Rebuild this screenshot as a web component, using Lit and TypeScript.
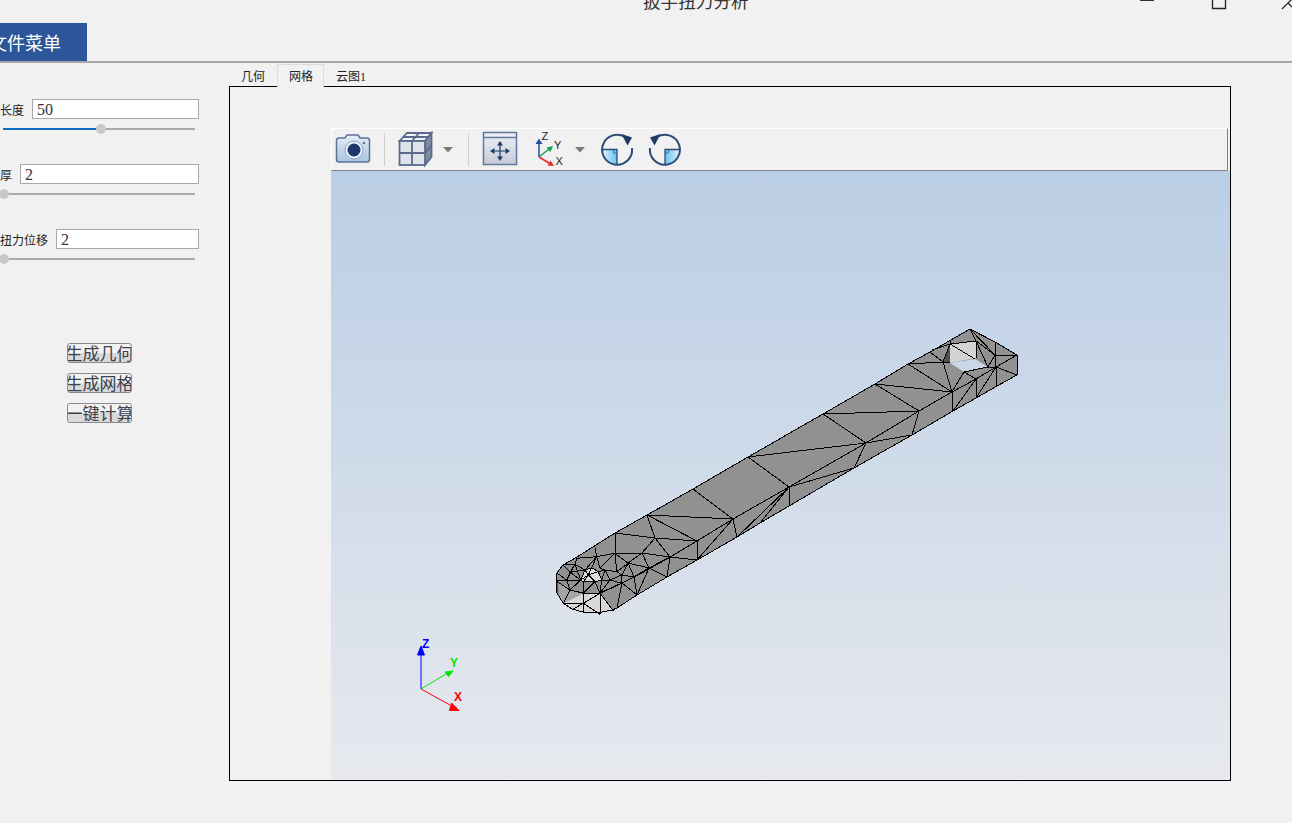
import { LitElement, html, css, svg } from "lit";
import { customElement } from "lit/decorators.js";

// wrench outline, in page coordinates (the svg viewBox matches the page)
const OUTLINE =
  "970,329 995,342 1017,355 1017,375 997,386 976,398 953,411 912,435 854,468 789,506 760,523 737,537 697,560 667,577 637,595 617,608 612,610 600,612.500 583,612 572,609 563,603 557,593 556,580 557,573 563,565 577,557 615,533 647,515 693,489 748,457 823,414 875,384 908,364 930,352";
const HOLE = "950,363 975,359 988,367 964,372";

const EDGES = [
  // right end
  "951,341 950,344 976,341 970,329",
  "950,344 943,362 950,363",
  "976,341 976,358",
  "950,344 975,359",
  "930,352 943,362 908,364",
  "932,350 950,344",
  "976,341 995,355 996,367",
  "970,329 995,355",
  "995,342 995,355 1017,355",
  "995,355 988,367 996,367",
  "976,341 988,367",
  "1017,355 996,367 1017,375",
  "996,367 997,386",
  "996,367 976,398",
  "996,367 976,379",
  "976,379 964,372 952,392",
  "943,362 952,392",
  "976,379 976,398",
  "964,372 988,367",
  "976,379 953,411",
  // long part, top face and side face
  "1017,355 996,367 976,379 952,392 919,411 866,443 789,487 733,519 697,541",
  "908,364 952,392 953,411",
  "875,384 952,392",
  "875,384 919,411 912,435",
  "823,414 919,411",
  "823,414 866,443 854,468",
  "748,457 866,443",
  "866,443 912,435",
  "748,457 789,487 789,506",
  "789,487 854,468",
  "789,487 760,523",
  "789,487 737,537 733,519",
  "693,489 733,519 697,560 697,541",
  "647,515 733,519",
  // towards the rounded end
  "647,515 697,541 655,538 647,515",
  "615,533 655,538 670,557 697,541",
  "670,557 697,560",
  "655,538 642,553 670,557 667,577",
  "670,557 649,568 642,553",
  "649,568 667,577",
  "649,568 634,577 637,595",
  "649,568 637,595",
  "642,553 628,563 649,568",
  "628,563 634,577",
  "642,553 615,553 615,533",
  "634,577 622,583 637,595",
  "622,575 634,577",
  "622,583 617,608",
  // top edge of the side wall
  "697,541 667,559 640,574 622,583 600,593 583,593 570,590 556,581",
];

// the dense part round the small hole, read off a 3x crop with its corner at 550,535
const END_EDGES = [
  "80,70 75,88 40,90",
  "75,88 105,105",
  "75,88 92,135",
  "75,88 50,135",
  "22,115 50,135",
  "18,135 50,135 92,135",
  "50,135 60,165",
  "92,135 60,165 100,175",
  "60,165 40,205",
  "100,140 100,175",
  "135,140 100,175 150,175",
  "135,140 150,175",
  "155,135 150,175",
  "155,135 180,135 150,175",
  "180,135 215,145 150,175",
  "150,175 190,228",
  "100,175 100,205 65,225",
  "100,205 100,235",
  "100,205 150,238",
  "100,205 40,205",
  "150,175 100,205",
  "150,175 150,238",
  "125,98 140,65 105,105",
  "140,65 80,70",
  "140,65 135,38",
  "140,65 195,55",
  "140,65 150,100 195,55",
  "150,100 165,105 200,110 195,55",
  "200,110 235,85 195,55",
  "200,110 215,120 180,135",
  "165,105 180,135",
  "215,120 215,145",
  "235,85 215,120",
  "92,135 105,105 125,98 145,110 155,135 135,140 100,140 92,135",
  "125,98 115,120 92,135",
  "115,120 135,140",
  "115,120 145,110",
  "115,120 100,140",
  "105,105 115,120",
  "75,88 60,112 50,135",
  "40,90 60,112 92,135",
  "60,112 105,105",
  "145,110 165,105",
  "155,135 165,105",
];

const fromCrop = (s: string) =>
  s
    .split(" ")
    .map((p) => {
      const [x, y] = p.split(",").map(Number);
      return `${(550 + x / 3).toFixed(1)},${(535 + y / 3).toFixed(1)}`;
    })
    .join(" ");

const edgePath = (list: string[]) =>
  list.map((s) => "M" + s.trim().split(/\s+/).join("L")).join("");

const wrench = svg`
  <path fill="#919191" fill-rule="evenodd" d="M${OUTLINE.split(" ").join("L")}Z M${HOLE.split(" ").join("L")}Z"></path>
  <polygon fill="#d4d4d4" points="950,344 976,341 976,358 950,363"></polygon>
  <polygon fill="#4f4f4f" points="950,344 943,362 950,363"></polygon>
  <polygon fill="#d8d8d8" points=${fromCrop("40,205 100,175 150,175 190,228 150,238 100,235 65,225")}></polygon>
  <polygon fill="#a6a6a6" points=${fromCrop("20,140 60,165 100,175 40,205 20,175")}></polygon>
  <polygon fill="#dcdcdc" points=${fromCrop("92,135 105,105 125,98 145,110 155,135 135,140 100,140")}></polygon>
  <polygon fill="#5a5a5a" points=${fromCrop("18,135 24,137 26,182 20,175")}></polygon>
  <path d=${edgePath([...EDGES, ...END_EDGES.map(fromCrop)])} fill="none" stroke="#000" shape-rendering="crispEdges"></path>
  <polygon points=${OUTLINE} fill="none" stroke="#000" shape-rendering="crispEdges"></polygon>
`;

const triad = svg`
  <g font-family="'Liberation Sans', sans-serif" font-weight="700" font-size="12">
    <path d="M421 689V655" stroke="#0000ff" fill="none"></path>
    <path d="M421 646L424.500 655H417.500Z" fill="#0000ff" stroke="#0000ff" stroke-linejoin="round"></path>
    <text x="422" y="648" fill="#0000ff">Z</text>
    <path d="M421 689L446 674" stroke="#00e600" fill="none"></path>
    <path d="M453 671L448.500 676.500L445 672Z" fill="#00e600" stroke="#00e600" stroke-linejoin="round"></path>
    <text x="450" y="667" fill="#00e600">Y</text>
    <path d="M421 689L450 705" stroke="#ff0000" fill="none"></path>
    <path d="M459 710.500L449.500 710.500L451.500 703Z" fill="#ff0000" stroke="#ff0000" stroke-linejoin="round"></path>
    <text x="454" y="701" fill="#ff0000">X</text>
  </g>
`;

const camera = html`<svg class="tool cam" viewBox="335 129 36 41">
  <defs>
    <linearGradient id="camBody" x1="0" y1="0" x2="0" y2="1">
      <stop offset="0" stop-color="#e4edf6"></stop>
      <stop offset="1" stop-color="#a9c4e0"></stop>
    </linearGradient>
  </defs>
  <path d="M339 138H345L347 135H358L360 138H367Q369.500 138 369.500 140.500V159.500Q369.500 162 367 162H339Q336.500 162 336.500 159.500V140.500Q336.500 138 339 138Z"
    fill="url(#camBody)" stroke="#5d7196" stroke-width="1.500"></path>
  <circle cx="354" cy="150" r="9" fill="#eef3f9" stroke="#8ea4c2"></circle>
  <circle cx="354" cy="150" r="6.500" fill="#1d3a70"></circle>
  <circle cx="364" cy="143" r="1.200" fill="#5d7196"></circle>
</svg>`;

const cube = html`<svg class="tool cube" viewBox="398 129 36 41">
  <path d="M399.500 141L407 133H431.500L425 141Z" fill="#f0f2f6" stroke="#5a6a8a" stroke-width="1.800"></path>
  <path d="M425 141L431.500 133V157L425 165Z" fill="#7f8ba3" stroke="#5a6a8a" stroke-width="1.800"></path>
  <rect x="399.500" y="141" width="25.500" height="24" fill="#dfe3ea" stroke="#5a6a8a" stroke-width="1.800"></rect>
  <path d="M412 141V165M399.500 153H425M412 141L419 133M403 137H428M425 153L431.500 145" fill="none" stroke="#5a6a8a" stroke-width="1.800"></path>
</svg>`;

const drop = (cls: string) => html`<svg class="tool ${cls}" viewBox="0 129 12 41">
  <path d="M1 147H11L6 152.500Z" fill="#7a7a7a"></path>
</svg>`;

const fit = html`<svg class="tool fit" viewBox="482 129 36 41">
  <defs>
    <linearGradient id="fitBody" x1="0" y1="0" x2="0" y2="1">
      <stop offset="0" stop-color="#eef0f4"></stop>
      <stop offset="1" stop-color="#c6ccd8"></stop>
    </linearGradient>
  </defs>
  <rect x="483.500" y="132.500" width="33" height="32" fill="url(#fitBody)" stroke="#6178a0" stroke-width="1.500"></rect>
  <path d="M483.500 137.500H516.500" stroke="#6178a0" stroke-width="1.500"></path>
  <path d="M500 144V157.500M493 151H507" stroke="#1f3a66" stroke-width="1.200"></path>
  <path d="M500 141L503 145.500H497ZM500 161L503 156.500H497ZM490 151L494.500 148V154ZM510 151L505.500 148V154Z" fill="#1f3a66"></path>
</svg>`;

const axes = html`<svg class="tool axes" viewBox="535 129 30 41">
  <path d="M539 157V143" stroke="#1f4aa8" stroke-width="1.500"></path>
  <path d="M539 138.500L542.500 144H535.500Z" fill="#1f4aa8"></path>
  <path d="M539 157L549 149" stroke="#16a04a" stroke-width="1.500"></path>
  <path d="M553 146L550.500 152L546.500 147.500Z" fill="#16a04a"></path>
  <path d="M539 157L549 163" stroke="#e8262a" stroke-width="1.500"></path>
  <path d="M554 166L547.500 165.500L550.500 160.500Z" fill="#e8262a"></path>
  <g font-family="'Liberation Sans', sans-serif" font-size="11" fill="#222">
    <text x="541.500" y="140">Z</text>
    <text x="554" y="149">Y</text>
    <text x="555.500" y="165">X</text>
  </g>
</svg>`;

// both rotate buttons use the same drawing, the second one is mirrored
const rotate = (cls: string) => html`<svg class="tool ${cls}" viewBox="600 129 34 41">
  <defs>
    <linearGradient id="quad${cls}" x1="0" y1="0" x2="1" y2="0">
      <stop offset="0" stop-color="#e2f3fc"></stop>
      <stop offset="1" stop-color="#6cc0f0"></stop>
    </linearGradient>
  </defs>
  <path d="M602 149.500H617V164.500A15 15 0 0 1 602 149.500Z" fill="url(#quad${cls})"></path>
  <path d="M613.500 149.500V153H617" fill="none" stroke="#2f7fb5"></path>
  <path d="M602 149.500H617V164.500" fill="none" stroke="#2b4b78" stroke-width="1.300"></path>
  <path d="M625 137A15 15 0 1 0 632 148" fill="none" stroke="#2b4b78" stroke-width="2"></path>
  <path d="M621.500 134L632 137.500L627.500 145.500Z" fill="#1f3a66"></path>
</svg>`;

const SLIDERS = [
  { label: "长度", value: "50", pct: 51 },
  { label: "厚", value: "2", pct: 0.5 },
  { label: "扭力位移", value: "2", pct: 0.5 },
];

@customElement("app-root")
export class AppRoot extends LitElement {
  static styles = css`
    :host {
      display: block;
      height: 823px;
      overflow: hidden;
      background: #f1f1f1;
      font-family: "Noto Sans CJK SC", "Liberation Sans", sans-serif;
      color: #222;
    }

    .titlebar {
      height: 23px;
      display: flex;
      overflow: hidden;
    }
    .title {
      margin: -11px 0 0 643px;
      width: 108px;
      font-size: 17.6px;
      line-height: 24px;
      height: 24px;
      color: #333;
      white-space: nowrap;
    }
    .winbtn {
      flex: none;
      height: 23px;
    }
    .winbtn.min { margin-left: 388px; width: 16px; }
    .winbtn.max { margin-left: 56px; width: 16px; }
    .winbtn.close { margin-left: 55px; width: 10px; overflow: visible; }

    .menubar {
      height: 38px;
      border-bottom: 2px solid #a6a6a6;
      overflow: hidden;
    }
    .filemenu {
      display: flex;
      align-items: center;
      justify-content: center;
      margin-left: -37px;
      width: 124px;
      height: 38px;
      background: #2b579a;
      color: #fff;
      font-size: 18px;
    }

    .main {
      display: flex;
    }

    .side {
      flex: none;
      display: flex;
      flex-direction: column;
      width: 229px;
      padding-top: 36px;
    }
    .group {
      height: 40px;
      margin-bottom: 25px;
    }
    .row {
      display: flex;
      align-items: center;
      gap: 8px;
      width: 199px;
      height: 20px;
      font-size: 12px;
    }
    .row label {
      flex: none;
    }
    .row input {
      flex: 1;
      min-width: 0;
      box-sizing: border-box;
      height: 20px;
      margin: 0;
      padding: 2px 4px 0;
      border: 1px solid #a9a9a9;
      background: #fff;
      color: #333;
      font-family: "Liberation Serif", serif;
      font-size: 16px;
      outline: none;
    }
    .slider {
      position: relative;
      margin: 9px 0 0 3px;
      width: 192px;
      height: 2px;
      background: #aaaaaa;
    }
    .slider .fill {
      height: 2px;
      background: #0f6cbd;
    }
    .slider .thumb {
      position: absolute;
      top: -4px;
      width: 10px;
      height: 10px;
      margin-left: -5px;
      border-radius: 50%;
      background: #c9c9c9;
    }

    .actions {
      display: flex;
      flex-direction: column;
      gap: 10px;
      width: 65px;
      margin: 49px 0 0 67px;
    }
    .actions button {
      display: flex;
      justify-content: center;
      align-items: center;
      box-sizing: border-box;
      height: 20px;
      width: 65px;
      padding: 0;
      overflow: hidden;
      white-space: nowrap;
      border: 1px solid #8a8a8a;
      border-radius: 3px;
      background: linear-gradient(#f2f2f2 0 50%, #d9d9d9 50% 100%);
      color: #3a4250;
      font-family: inherit;
      font-size: 17px;
      line-height: 18px;
    }

    .content {
      flex: none;
      width: 1002px;
      padding-top: 1px;
    }
    .tabs {
      display: flex;
      height: 22px;
      position: relative;
      z-index: 1;
      font-family: "Liberation Serif", "Noto Sans CJK SC", serif;
      font-size: 12px;
    }
    .tab {
      box-sizing: border-box;
      width: 48px;
      height: 21px;
      margin-top: 2px;
      padding-left: 12px;
      line-height: 22px;
    }
    .tab.on {
      width: 47px;
      height: 23px;
      margin-top: 0;
      padding-left: 11px;
      line-height: 24px;
      border: 1px solid #dcdcdc;
      border-bottom: none;
      background: #f1f1f1;
    }
    .frame {
      box-sizing: border-box;
      height: 695px;
      padding: 41px 1px 0 101px;
      border: 1px solid #000;
    }
    .toolbar {
      display: flex;
      box-sizing: border-box;
      height: 43px;
      border-top: 1px solid #fff;
      border-left: 1px solid #fff;
      border-bottom: 1px solid #808080;
      border-right: 1px solid #808080;
      margin-right: 1px;
      background: #f1f1f1;
    }
    .tool {
      flex: none;
      height: 41px;
    }
    .cam { margin-left: 3px; width: 36px; }
    .sep {
      flex: none;
      width: 1px;
      height: 33px;
      margin: 4px 0 0 13px;
      background: #cfcfcf;
    }
    .sep.b { margin-left: 14px; }
    .cube { margin-left: 13px; width: 36px; }
    .drop-a { margin-left: 8px; width: 12px; }
    .fit { margin-left: 13px; width: 36px; }
    .axes { margin-left: 17px; width: 30px; }
    .drop-b { margin-left: 9px; width: 12px; }
    .rot-a { margin-left: 14px; width: 34px; }
    .rot-b { margin-left: 14px; width: 34px; transform: scaleX(-1); }

    .viewport {
      display: block;
      width: 899px;
      height: 609px;
      background: linear-gradient(#bacee5, #e7e9ee);
    }
  `;

  render() {
    return html`
      <div class="titlebar">
        <div class="title">扳手扭力分析</div>
        <svg class="winbtn min" viewBox="0 0 16 23"><path d="M1 0.500H15" stroke="#333"></path></svg>
        <svg class="winbtn max" viewBox="0 0 16 23"><path d="M1.500 -3V8.500H14.500V-3" fill="none" stroke="#222" stroke-width="1.300"></path></svg>
        <svg class="winbtn close" viewBox="0 0 10 23"><path d="M0 9L10 -1M6 3L10 7" stroke="#222" stroke-width="1.200"></path></svg>
      </div>
      <div class="menubar"><div class="filemenu">文件菜单</div></div>
      <div class="main">
        <div class="side">
          ${SLIDERS.map(
            (s) => html`
              <div class="group">
                <div class="row">
                  <label>${s.label}</label>
                  <input .value=${s.value} />
                </div>
                <div class="slider">
                  <div class="fill" style="width:${s.pct}%"></div>
                  <div class="thumb" style="left:${s.pct}%"></div>
                </div>
              </div>
            `
          )}
          <div class="actions">
            <button>生成几何</button>
            <button>生成网格</button>
            <button>一键计算</button>
          </div>
        </div>
        <div class="content">
          <div class="tabs">
            <div class="tab">几何</div>
            <div class="tab on">网格</div>
            <div class="tab">云图1</div>
          </div>
          <div class="frame">
            <div class="toolbar">
              ${camera}
              <div class="sep"></div>
              ${cube} ${drop("drop-a")}
              <div class="sep b"></div>
              ${fit} ${axes} ${drop("drop-b")} ${rotate("rot-a")} ${rotate("rot-b")}
            </div>
            <svg class="viewport" viewBox="331 171 899 609">${wrench} ${triad}</svg>
          </div>
        </div>
      </div>
    `;
  }
}
